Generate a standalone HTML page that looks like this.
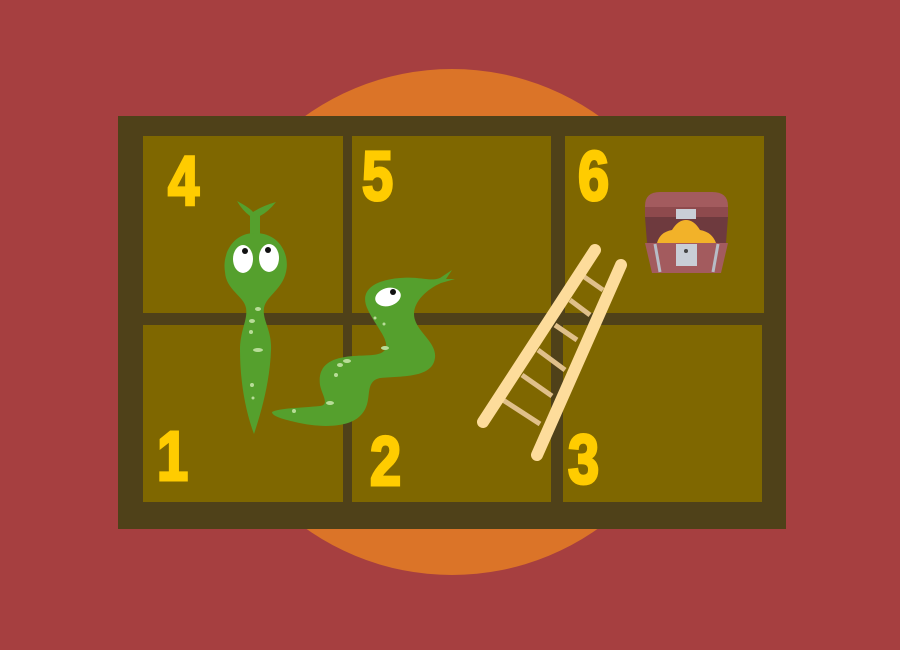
<!DOCTYPE html>
<html><head><meta charset="utf-8"><style>
html,body{margin:0;padding:0;width:900px;height:650px;overflow:hidden;background:#a63f40}
.n{position:absolute;font-family:"Liberation Sans",sans-serif;font-weight:900;color:#ffcc00;font-size:70px;line-height:1;transform:scaleX(0.8);transform-origin:left top;-webkit-text-stroke:3px #ffcc00}
</style></head><body>
<svg width="900" height="650" style="position:absolute;left:0;top:0">
<circle cx="452" cy="322" r="253" fill="#db7428"/>
<rect x="118" y="116" width="668" height="413" fill="#4f4119"/>
<g fill="#7f6700">
<rect x="143" y="136" width="200" height="177"/>
<rect x="352" y="136" width="199" height="177"/>
<rect x="565" y="136" width="199" height="177"/>
<rect x="143" y="325" width="200" height="177"/>
<rect x="352" y="325" width="199" height="177"/>
<rect x="563" y="325" width="199" height="177"/>
</g>
<g fill="#55a02d">
<path d="M237,201 Q250,208 253,212 Q262,206 276,202 Q268,212 260,216 L260,236 L250,236 L250,216 Q242,210 237,201Z"/>
<path d="M255,233 C280,233 290,255 286,272 C282,290 266,296 264,308 C262,320 272,330 271,350 C270,380 262,410 254,434 C245,410 240,380 240,350 C240,330 248,320 246,308 C244,296 226,290 225,272 C222,255 232,233 255,233Z"/>
<path d="M368,310 C358,290 375,280 400,278 C420,276 430,282 440,278 L452,270 L446,279 L455,279 L441,283 C425,290 410,305 415,320 C420,335 440,345 434,362 C428,378 400,376 380,378 C362,382 375,402 360,416 C348,428 320,428 295,422 C282,419 272,416 272,412 C280,408 300,408 320,406 C330,405 322,395 320,385 C318,370 325,360 345,357 C365,354 382,358 386,348 C388,338 375,325 368,310Z"/>
</g>
<g fill="#fff">
<ellipse cx="243" cy="259" rx="10" ry="14"/>
<ellipse cx="269" cy="258" rx="10" ry="14"/>
<ellipse cx="388" cy="297" rx="13" ry="9" transform="rotate(-15 388 297)"/>
</g>
<g fill="#111">
<circle cx="245" cy="251" r="3"/><circle cx="268" cy="250" r="3"/><circle cx="393" cy="292" r="3"/>
</g>
<g fill="#b8dc98">
<ellipse cx="258" cy="309" rx="3" ry="2"/><ellipse cx="252" cy="321" rx="3" ry="2"/><circle cx="251" cy="332" r="2"/>
<ellipse cx="258" cy="350" rx="5" ry="2"/><circle cx="252" cy="385" r="2"/><circle cx="253" cy="398" r="1.5"/>
<ellipse cx="347" cy="361" rx="4" ry="2"/><ellipse cx="340" cy="365" rx="3" ry="2"/><circle cx="336" cy="375" r="2"/>
<ellipse cx="385" cy="348" rx="4" ry="2"/><ellipse cx="330" cy="403" rx="4" ry="2"/><circle cx="294" cy="411" r="2"/>
<circle cx="375" cy="318" r="1.5"/><circle cx="384" cy="324" r="1.5"/>
</g>
<g stroke="#e0c08a" stroke-width="5">
<line x1="583" y1="276" x2="603" y2="290"/>
<line x1="570" y1="300" x2="590" y2="315"/>
<line x1="555" y1="325" x2="577" y2="340"/>
<line x1="538" y1="350" x2="565" y2="370"/>
<line x1="522" y1="375" x2="552" y2="396"/>
<line x1="503" y1="400" x2="540" y2="424"/>
</g>
<g stroke="#fddc9b" stroke-width="12" stroke-linecap="round">
<line x1="483" y1="422" x2="595" y2="250"/>
<line x1="537" y1="455" x2="621" y2="265"/>
</g>
<path d="M645,217 L645,206 Q645,192 660,192 L712,192 Q728,192 728,206 L728,217Z" fill="#a35b5e"/>
<rect x="645" y="207" width="83" height="10" fill="#8e4a4d"/>
<path d="M645,217 L728,217 L726,243 L647,243Z" fill="#6e3a3e"/>
<rect x="676" y="209" width="20" height="10" fill="#c9ced6"/>
<path d="M657,243 Q660,232 672,230 Q678,220 686,220 Q694,220 700,230 Q712,232 716,243Z" fill="#f2b229"/>
<path d="M645,243 L728,243 L721,273 L652,273Z" fill="#a35b5e"/>
<path d="M655,244 L660,272 M718,244 L713,272" stroke="#b7bcc6" stroke-width="3"/>
<rect x="676" y="244" width="21" height="22" fill="#c9ced6"/>
<circle cx="686" cy="251" r="2" fill="#444"/>
</svg>
<div class="n" style="left:168px;top:146px">4</div>
<div class="n" style="left:362px;top:141px">5</div>
<div class="n" style="left:578px;top:141px">6</div>
<div class="n" style="left:157px;top:421px">1</div>
<div class="n" style="left:370px;top:426px">2</div>
<div class="n" style="left:568px;top:424px">3</div>
</body></html>
